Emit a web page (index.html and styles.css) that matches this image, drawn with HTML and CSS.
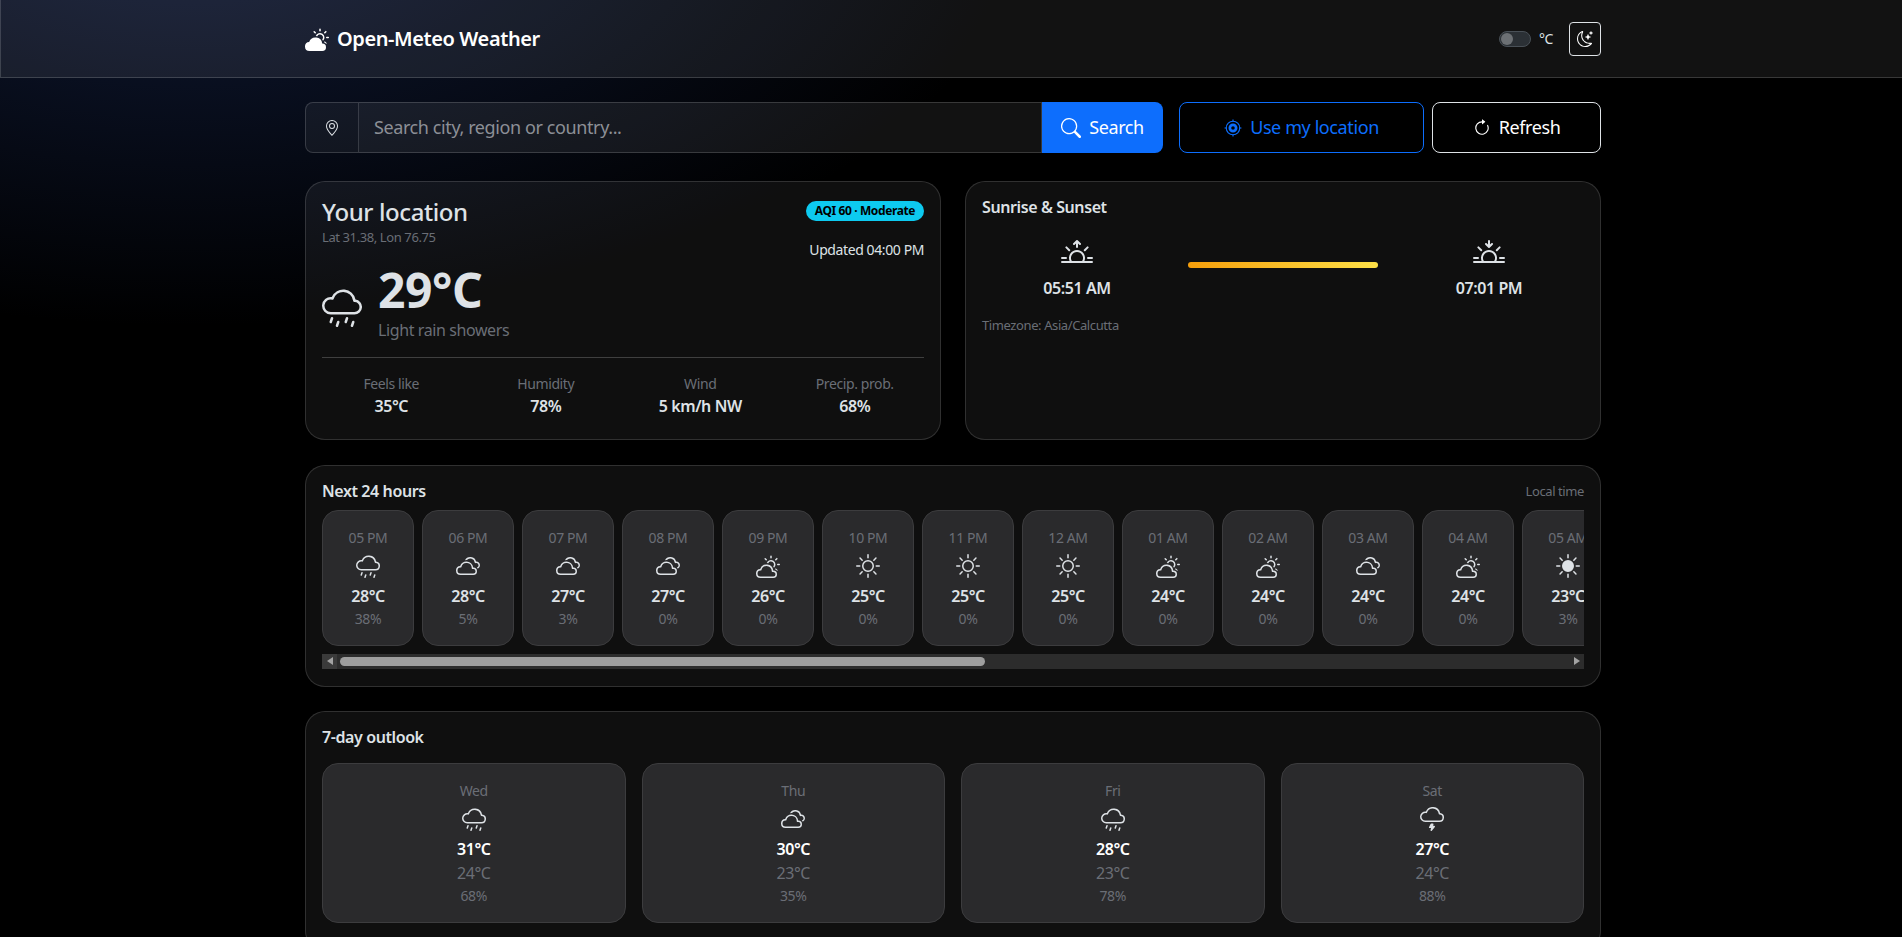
FILE: index.html
```html
<!DOCTYPE html>
<html lang="en">
<head>
  <meta charset="UTF-8">
  <title>Open-Meteo Weather</title>
  <link rel="stylesheet" href="styles.css">
</head>
<body>
  <svg class="sprite" xmlns="http://www.w3.org/2000/svg">
    <symbol id="i-brand" viewBox="0 0 16 16"><path d="M11.473 11a4.5 4.5 0 0 0-8.72-.99A3 3 0 0 0 3 16h8.5a2.5 2.5 0 0 0 0-5z"/><path d="M10.5 1.5a.5.5 0 0 0-1 0v1a.5.5 0 0 0 1 0zm3.743 1.964a.5.5 0 1 0-.707-.707l-.708.707a.5.5 0 0 0 .708.708zm-7.779-.707a.5.5 0 0 0-.707.707l.707.708a.5.5 0 1 0 .708-.708zm1.734 3.374a2 2 0 1 1 3.296 2.198q.3.423.516.898a3 3 0 1 0-4.84-3.225q.529.017 1.028.129m4.484 4.074c.6.215 1.125.59 1.522 1.072a.5.5 0 0 0 .039-.742l-.707-.707a.5.5 0 0 0-.854.377M14.5 6.5a.5.5 0 0 0 0 1h1a.5.5 0 0 0 0-1z"/></symbol>
    <symbol id="i-moon" viewBox="0 0 16 16"><path d="M6 .278a.77.77 0 0 1 .08.858 7.2 7.2 0 0 0-.878 3.46c0 4.021 3.278 7.277 7.318 7.277q.792-.001 1.533-.16a.79.79 0 0 1 .81.316.73.73 0 0 1-.031.893A8.35 8.35 0 0 1 8.344 16C3.734 16 0 12.286 0 7.71 0 4.266 2.114 1.312 5.124.06A.75.75 0 0 1 6 .278M4.858 1.311A7.27 7.27 0 0 0 1.025 7.71c0 4.02 3.279 7.276 7.319 7.276a7.32 7.32 0 0 0 5.205-2.162q-.506.063-1.029.063c-4.61 0-8.343-3.714-8.343-8.29 0-1.167.242-2.278.681-3.286"/><path d="M10.794 3.148a.217.217 0 0 1 .412 0l.387 1.162c.173.518.579.924 1.097 1.097l1.162.387a.217.217 0 0 1 0 .412l-1.162.387a1.73 1.73 0 0 0-1.097 1.097l-.387 1.162a.217.217 0 0 1-.412 0l-.387-1.162A1.73 1.73 0 0 0 9.31 6.593l-1.162-.387a.217.217 0 0 1 0-.412l1.162-.387a1.73 1.73 0 0 0 1.097-1.097zM13.863.099a.145.145 0 0 1 .274 0l.258.774c.115.346.386.617.732.732l.774.258a.145.145 0 0 1 0 .274l-.774.258a1.16 1.16 0 0 0-.732.732l-.258.774a.145.145 0 0 1-.274 0l-.258-.774a1.16 1.16 0 0 0-.732-.732l-.774-.258a.145.145 0 0 1 0-.274l.774-.258c.346-.115.617-.386.732-.732z"/></symbol>
    <symbol id="i-geo" viewBox="0 0 16 16"><path d="M12.166 8.94c-.524 1.062-1.234 2.12-1.96 3.07A32 32 0 0 1 8 14.58a32 32 0 0 1-2.206-2.57c-.726-.95-1.436-2.008-1.96-3.07C3.304 7.867 3 6.862 3 6a5 5 0 0 1 10 0c0 .862-.305 1.867-.834 2.94M8 16s6-5.686 6-10A6 6 0 0 0 2 6c0 4.314 6 10 6 10"/><path d="M8 8a2 2 0 1 1 0-4 2 2 0 0 1 0 4m0 1a3 3 0 1 0 0-6 3 3 0 0 0 0 6"/></symbol>
    <symbol id="i-search" viewBox="0 0 16 16"><path d="M11.742 10.344a6.5 6.5 0 1 0-1.397 1.398h-.001q.044.06.098.115l3.85 3.85a1 1 0 0 0 1.415-1.414l-3.85-3.85a1 1 0 0 0-.115-.1zM12 6.5a5.5 5.5 0 1 1-11 0 5.5 5.5 0 0 1 11 0"/></symbol>
    <symbol id="i-target" viewBox="0 0 16 16"><path d="M7.5.5h1v2h-1zM7.5 13.5h1v2h-1zM.5 7.5h2v1h-2zM13.5 7.5h2v1h-2z"/><path d="M8 1.5a6.5 6.5 0 1 1 0 13 6.5 6.5 0 0 1 0-13m0 1a5.5 5.5 0 1 0 0 11 5.5 5.5 0 0 0 0-11"/><path d="M8 4a4 4 0 1 1 0 8 4 4 0 0 1 0-8m0 2.4a1.6 1.6 0 1 0 0 3.2 1.6 1.6 0 0 0 0-3.2"/></symbol>
    <symbol id="i-refresh" viewBox="0 0 16 16"><path fill-rule="evenodd" d="M8 3a5 5 0 1 0 4.546 2.914.5.5 0 0 1 .908-.417A6 6 0 1 1 8 2z"/><path d="M8 4.466V.534a.25.25 0 0 1 .41-.192l2.36 1.966c.12.1.12.284 0 .384L8.41 4.658A.25.25 0 0 1 8 4.466"/></symbol>
    <symbol id="i-drizzle" viewBox="0 0 16 16"><path d="M4.158 12.025a.5.5 0 0 1 .316.633l-.5 1.5a.5.5 0 0 1-.948-.316l.5-1.5a.5.5 0 0 1 .632-.317m6 0a.5.5 0 0 1 .316.633l-.5 1.5a.5.5 0 0 1-.948-.316l.5-1.5a.5.5 0 0 1 .632-.317m-3.5 1.5a.5.5 0 0 1 .316.633l-.5 1.5a.5.5 0 0 1-.948-.316l.5-1.5a.5.5 0 0 1 .632-.317m6 0a.5.5 0 0 1 .316.633l-.5 1.5a.5.5 0 1 1-.948-.316l.5-1.5a.5.5 0 0 1 .632-.317m.747-8.498a5.001 5.001 0 0 0-9.499-1.004A3.5 3.5 0 1 0 3.5 11H13a3 3 0 0 0 .405-5.973M8.5 2a4 4 0 0 1 3.976 3.555.5.5 0 0 0 .5.445H13a2 2 0 0 1 0 4H3.5a2.5 2.5 0 1 1 .605-4.926.5.5 0 0 0 .596-.329A4 4 0 0 1 8.5 2"/></symbol>
    <symbol id="i-clouds" viewBox="0 0 16 16"><path d="M16 7.5a2.5 2.5 0 0 1-1.456 2.272 3.5 3.5 0 0 0-.65-.824 1.5 1.5 0 0 0-.789-2.896.5.5 0 0 1-.627-.421 3 3 0 0 0-5.22-1.625 5.6 5.6 0 0 0-1.276.088 4.002 4.002 0 0 1 7.392.91A2.5 2.5 0 0 1 16 7.5"/><path d="M7 5a4.5 4.5 0 0 1 4.473 4h.027a2.5 2.5 0 0 1 0 5H3a3 3 0 0 1-.247-5.99A4.5 4.5 0 0 1 7 5m3.5 4.5a3.5 3.5 0 0 0-6.89-.873.5.5 0 0 1-.51.375A2 2 0 1 0 3 13h8.5a1.5 1.5 0 1 0-.376-2.953.5.5 0 0 1-.624-.492z"/></symbol>
    <symbol id="i-cloud-sun" viewBox="0 0 16 16"><path d="M7 8a3.5 3.5 0 0 1 3.5 3.555.5.5 0 0 0 .624.492A1.503 1.503 0 0 1 13 13.5a1.5 1.5 0 0 1-1.5 1.5H3a2 2 0 1 1 .1-3.998.5.5 0 0 0 .51-.375A3.5 3.5 0 0 1 7 8m4.473 3a4.5 4.5 0 0 0-8.72-.99A3 3 0 0 0 3 16h8.5a2.5 2.5 0 0 0 0-5z"/><path d="M10.5 1.5a.5.5 0 0 0-1 0v1a.5.5 0 0 0 1 0zm3.743 1.964a.5.5 0 1 0-.707-.707l-.708.707a.5.5 0 0 0 .708.708zm-7.779-.707a.5.5 0 0 0-.707.707l.707.708a.5.5 0 1 0 .708-.708zm1.734 3.374a2 2 0 1 1 3.296 2.198q.3.423.516.898a3 3 0 1 0-4.84-3.225q.529.017 1.028.129m4.484 4.074c.6.215 1.125.59 1.522 1.072a.5.5 0 0 0 .039-.742l-.707-.707a.5.5 0 0 0-.854.377M14.5 6.5a.5.5 0 0 0 0 1h1a.5.5 0 0 0 0-1z"/></symbol>
    <symbol id="i-sun" viewBox="0 0 16 16"><path d="M8 11a3 3 0 1 1 0-6 3 3 0 0 1 0 6m0 1a4 4 0 1 0 0-8 4 4 0 0 0 0 8M8 0a.5.5 0 0 1 .5.5v2a.5.5 0 0 1-1 0v-2A.5.5 0 0 1 8 0m0 13a.5.5 0 0 1 .5.5v2a.5.5 0 0 1-1 0v-2A.5.5 0 0 1 8 13m8-5a.5.5 0 0 1-.5.5h-2a.5.5 0 0 1 0-1h2a.5.5 0 0 1 .5.5M3 8a.5.5 0 0 1-.5.5h-2a.5.5 0 0 1 0-1h2A.5.5 0 0 1 3 8m10.657-5.657a.5.5 0 0 1 0 .707l-1.414 1.415a.5.5 0 1 1-.707-.708l1.414-1.414a.5.5 0 0 1 .707 0m-9.193 9.193a.5.5 0 0 1 0 .707L3.05 13.657a.5.5 0 0 1-.707-.707l1.414-1.414a.5.5 0 0 1 .707 0m9.193 2.121a.5.5 0 0 1-.707 0l-1.414-1.414a.5.5 0 0 1 .707-.707l1.414 1.414a.5.5 0 0 1 0 .707M4.464 4.465a.5.5 0 0 1-.707 0L2.343 3.05a.5.5 0 1 1 .707-.707l1.414 1.414a.5.5 0 0 1 0 .708"/></symbol>
    <symbol id="i-sun-fill" viewBox="0 0 16 16"><path d="M8 12a4 4 0 1 0 0-8 4 4 0 0 0 0 8M8 0a.5.5 0 0 1 .5.5v2a.5.5 0 0 1-1 0v-2A.5.5 0 0 1 8 0m0 13a.5.5 0 0 1 .5.5v2a.5.5 0 0 1-1 0v-2A.5.5 0 0 1 8 13m8-5a.5.5 0 0 1-.5.5h-2a.5.5 0 0 1 0-1h2a.5.5 0 0 1 .5.5M3 8a.5.5 0 0 1-.5.5h-2a.5.5 0 0 1 0-1h2A.5.5 0 0 1 3 8m10.657-5.657a.5.5 0 0 1 0 .707l-1.414 1.415a.5.5 0 1 1-.707-.708l1.414-1.414a.5.5 0 0 1 .707 0m-9.193 9.193a.5.5 0 0 1 0 .707L3.05 13.657a.5.5 0 0 1-.707-.707l1.414-1.414a.5.5 0 0 1 .707 0m9.193 2.121a.5.5 0 0 1-.707 0l-1.414-1.414a.5.5 0 0 1 .707-.707l1.414 1.414a.5.5 0 0 1 0 .707M4.464 4.465a.5.5 0 0 1-.707 0L2.343 3.05a.5.5 0 1 1 .707-.707l1.414 1.414a.5.5 0 0 1 0 .708"/></symbol>
    <symbol id="i-sunrise" viewBox="0 0 16 16"><path d="M7.646 1.146a.5.5 0 0 1 .708 0l1.5 1.5a.5.5 0 0 1-.708.708L8.5 2.707V4.5a.5.5 0 0 1-1 0V2.707l-.646.647a.5.5 0 1 1-.708-.708zM2.343 4.343a.5.5 0 0 1 .707 0l1.414 1.414a.5.5 0 0 1-.707.707L2.343 5.05a.5.5 0 0 1 0-.707m11.314 0a.5.5 0 0 1 0 .707l-1.414 1.414a.5.5 0 1 1-.707-.707l1.414-1.414a.5.5 0 0 1 .707 0M8 7a3 3 0 0 1 2.599 4.5H5.4A3 3 0 0 1 8 7m3.71 4.5a4 4 0 1 0-7.418 0H.499a.5.5 0 0 0 0 1h15a.5.5 0 0 0 0-1h-3.79zM0 10a.5.5 0 0 1 .5-.5h2a.5.5 0 0 1 0 1h-2A.5.5 0 0 1 0 10m13 0a.5.5 0 0 1 .5-.5h2a.5.5 0 0 1 0 1h-2a.5.5 0 0 1-.5-.5"/></symbol>
    <symbol id="i-sunset" viewBox="0 0 16 16"><path d="M7.646 4.854a.5.5 0 0 0 .708 0l1.5-1.5a.5.5 0 0 0-.708-.708l-.646.647V1.5a.5.5 0 0 0-1 0v1.793l-.646-.647a.5.5 0 1 0-.708.708zm-5.303-.51a.5.5 0 0 1 .707 0l1.414 1.413a.5.5 0 0 1-.707.707L2.343 5.05a.5.5 0 0 1 0-.707zm11.314 0a.5.5 0 0 1 0 .706l-1.414 1.414a.5.5 0 1 1-.707-.707l1.414-1.414a.5.5 0 0 1 .707 0zM8 7a3 3 0 0 1 2.599 4.5H5.4A3 3 0 0 1 8 7zm3.71 4.5a4 4 0 1 0-7.418 0H.499a.5.5 0 0 0 0 1h15a.5.5 0 0 0 0-1h-3.79zM0 10a.5.5 0 0 1 .5-.5h2a.5.5 0 0 1 0 1h-2A.5.5 0 0 1 0 10zm13 0a.5.5 0 0 1 .5-.5h2a.5.5 0 0 1 0 1h-2a.5.5 0 0 1-.5-.5z"/></symbol>
    <symbol id="i-storm" viewBox="0 0 16 16"><path d="M13.405 4.027a5.001 5.001 0 0 0-9.499-1.004A3.5 3.5 0 1 0 3.5 10H13a3 3 0 0 0 .405-5.973M8.5 1a4 4 0 0 1 3.976 3.555.5.5 0 0 0 .5.445H13a2 2 0 0 1 0 4H3.5a2.5 2.5 0 1 1 .605-4.926.5.5 0 0 0 .596-.329A4 4 0 0 1 8.5 1M7.053 11.276A.5.5 0 0 1 7.5 11h1a.5.5 0 0 1 .474.658l-.28.842H9.5a.5.5 0 0 1 .39.812l-2 2.5a.5.5 0 0 1-.875-.433L7.36 14H6.5a.5.5 0 0 1-.447-.724z"/></symbol>
  </svg>

  <header class="topbar">
    <div class="page topbar-inner">
      <div class="brand"><svg class="bi brand-icon"><use href="#i-brand"/></svg><span>Open-Meteo Weather</span></div>
      <div class="topbar-tools">
        <span class="switch"><span class="switch-knob"></span></span>
        <span class="unit">°C</span>
        <button class="theme-btn" type="button"><svg class="bi"><use href="#i-moon"/></svg></button>
      </div>
    </div>
  </header>

  <main class="page">
    <div class="search-row">
      <form class="search-box">
        <span class="search-addon"><svg class="bi"><use href="#i-geo"/></svg></span>
        <input class="search-input" type="text" placeholder="Search city, region or country...">
        <button class="search-btn" type="submit"><svg class="bi"><use href="#i-search"/></svg>Search</button>
      </form>
      <button class="btn btn-blue" type="button"><svg class="bi"><use href="#i-target"/></svg>Use my location</button>
      <button class="btn btn-white" type="button"><svg class="bi"><use href="#i-refresh"/></svg>Refresh</button>
    </div>

    <div class="top-cards">
      <section class="card current">
        <div class="current-head">
          <div>
            <h1 class="place">Your location</h1>
            <div class="muted coords">Lat 31.38, Lon 76.75</div>
          </div>
          <div class="current-side">
            <span class="aqi">AQI 60 · Moderate</span>
            <div class="updated">Updated 04:00 PM</div>
          </div>
        </div>
        <div class="now">
          <svg class="bi now-icon"><use href="#i-drizzle"/></svg>
          <div>
            <div class="now-temp">29°C</div>
            <div class="muted now-text">Light rain showers</div>
          </div>
        </div>
        <div class="stats">
          <div class="stat"><div class="muted">Feels like</div><b>35°C</b></div>
          <div class="stat"><div class="muted">Humidity</div><b>78%</b></div>
          <div class="stat"><div class="muted">Wind</div><b>5 km/h NW</b></div>
          <div class="stat"><div class="muted">Precip. prob.</div><b>68%</b></div>
        </div>
      </section>

      <section class="card">
        <h2 class="card-title">Sunrise &amp; Sunset</h2>
        <div class="sun-row">
          <div class="sun-col"><svg class="bi sun-icon"><use href="#i-sunrise"/></svg><b>05:51 AM</b></div>
          <div class="sun-bar"></div>
          <div class="sun-col"><svg class="bi sun-icon"><use href="#i-sunset"/></svg><b>07:01 PM</b></div>
        </div>
        <div class="muted timezone">Timezone: Asia/Calcutta</div>
      </section>
    </div>

    <section class="card hours-card">
      <div class="card-head">
        <h2 class="card-title">Next 24 hours</h2>
        <span class="muted local">Local time</span>
      </div>
      <div class="hours">
        <div class="tile hour"><span class="muted">05 PM</span><svg class="bi"><use href="#i-drizzle"/></svg><b>28°C</b><span class="muted">38%</span></div>
        <div class="tile hour"><span class="muted">06 PM</span><svg class="bi"><use href="#i-clouds"/></svg><b>28°C</b><span class="muted">5%</span></div>
        <div class="tile hour"><span class="muted">07 PM</span><svg class="bi"><use href="#i-clouds"/></svg><b>27°C</b><span class="muted">3%</span></div>
        <div class="tile hour"><span class="muted">08 PM</span><svg class="bi"><use href="#i-clouds"/></svg><b>27°C</b><span class="muted">0%</span></div>
        <div class="tile hour"><span class="muted">09 PM</span><svg class="bi"><use href="#i-cloud-sun"/></svg><b>26°C</b><span class="muted">0%</span></div>
        <div class="tile hour"><span class="muted">10 PM</span><svg class="bi"><use href="#i-sun"/></svg><b>25°C</b><span class="muted">0%</span></div>
        <div class="tile hour"><span class="muted">11 PM</span><svg class="bi"><use href="#i-sun"/></svg><b>25°C</b><span class="muted">0%</span></div>
        <div class="tile hour"><span class="muted">12 AM</span><svg class="bi"><use href="#i-sun"/></svg><b>25°C</b><span class="muted">0%</span></div>
        <div class="tile hour"><span class="muted">01 AM</span><svg class="bi"><use href="#i-cloud-sun"/></svg><b>24°C</b><span class="muted">0%</span></div>
        <div class="tile hour"><span class="muted">02 AM</span><svg class="bi"><use href="#i-cloud-sun"/></svg><b>24°C</b><span class="muted">0%</span></div>
        <div class="tile hour"><span class="muted">03 AM</span><svg class="bi"><use href="#i-clouds"/></svg><b>24°C</b><span class="muted">0%</span></div>
        <div class="tile hour"><span class="muted">04 AM</span><svg class="bi"><use href="#i-cloud-sun"/></svg><b>24°C</b><span class="muted">0%</span></div>
        <div class="tile hour"><span class="muted">05 AM</span><svg class="bi"><use href="#i-sun-fill"/></svg><b>23°C</b><span class="muted">3%</span></div>
      </div>
      <div class="scrollbar">
        <span class="scroll-btn"><span class="arrow-left"></span></span>
        <span class="scroll-track"><span class="scroll-thumb"></span></span>
        <span class="scroll-btn end"><span class="arrow-right"></span></span>
      </div>
    </section>

    <section class="card week-card">
      <h2 class="card-title">7-day outlook</h2>
      <div class="days">
        <div class="tile day"><span class="muted">Wed</span><svg class="bi"><use href="#i-drizzle"/></svg><b>31°C</b><span class="muted low">24°C</span><span class="muted">68%</span></div>
        <div class="tile day"><span class="muted">Thu</span><svg class="bi"><use href="#i-clouds"/></svg><b>30°C</b><span class="muted low">23°C</span><span class="muted">35%</span></div>
        <div class="tile day"><span class="muted">Fri</span><svg class="bi"><use href="#i-drizzle"/></svg><b>28°C</b><span class="muted low">23°C</span><span class="muted">78%</span></div>
        <div class="tile day"><span class="muted">Sat</span><svg class="bi"><use href="#i-storm"/></svg><b>27°C</b><span class="muted low">24°C</span><span class="muted">88%</span></div>
      </div>
    </section>
  </main>
</body>
</html>
```

FILE: styles.css
```css
* { box-sizing: border-box; }
html, body { height: 100%; overflow: hidden; }
body {
  margin: 0;
  font-family: "Noto Sans", "Open Sans", sans-serif;
  font-size: 16px;
  line-height: 1.5;
  letter-spacing: -0.025em;
  color: #dee2e6;
  background: radial-gradient(1200px 600px at 10% -10%, rgba(37, 62, 130, .42), transparent 70%), #000;
}
.sprite { display: none; }
.bi { width: 1em; height: 1em; fill: currentColor; display: inline-block; flex: none; }
.muted { color: #6a6e76; font-size: 14px; }
b { font-weight: 600; }

.page { width: 1296px; margin-left: 305px; }

.topbar { height: 78px; border: 1px solid rgba(255, 255, 255, .16); border-top: 0; border-right: 0; background: rgba(255, 255, 255, .07); }
.topbar-inner { height: 100%; display: flex; align-items: center; justify-content: space-between; margin-left: 304px; }
.brand { display: flex; align-items: center; gap: 8px; font-size: 20px; font-weight: 600; color: #fff; }
.brand-icon { font-size: 24px; }
.topbar-tools { display: flex; align-items: center; color: #dee2e6; }
.switch { width: 32px; height: 16px; border-radius: 8px; background: #2b3035; border: 1px solid #495057; display: flex; align-items: center; padding-left: 1px; }
.switch-knob { width: 12px; height: 12px; border-radius: 50%; background: #6c7074; }
.unit { font-size: 14px; margin: 0 16px 0 8px; }
.theme-btn { width: 32px; height: 34px; padding: 0; border: 1px solid #dee2e6; border-radius: 4px; background: none; color: #fff; font-size: 16px; display: flex; align-items: center; justify-content: center; }

.search-row { display: flex; align-items: stretch; height: 51px; margin: 24px 0 28px; }
.search-box { flex: 1; display: flex; margin-right: 16px; }
.search-addon { width: 54px; display: flex; align-items: center; justify-content: center; font-size: 16px; color: #dee2e6; background: rgba(255, 255, 255, .05); border: 1px solid rgba(255, 255, 255, .16); border-radius: 8px 0 0 8px; }
.search-input { flex: 1; min-width: 0; padding: 0 15px; font: inherit; font-size: 18px; letter-spacing: inherit; color: #dee2e6; background: rgba(255, 255, 255, .07); border: 1px solid rgba(255, 255, 255, .16); border-left: 0; outline: none; }
.search-input::placeholder { color: #8c8f96; opacity: 1; }
.search-btn { width: 121px; display: flex; align-items: center; justify-content: center; gap: 8px; padding: 0; font: inherit; font-size: 18px; letter-spacing: inherit; color: #fff; background: #0d6efd; border: 0; border-radius: 0 8px 8px 0; }
.search-btn .bi { font-size: 20px; }
.btn { display: flex; align-items: center; justify-content: center; gap: 8px; padding: 0; font: inherit; font-size: 18px; letter-spacing: inherit; background: none; border-radius: 8px; border: 1px solid; }
.btn .bi { font-size: 18px; }
.btn-blue { width: 245px; color: #0d6efd; border-color: #0d6efd; margin-right: 8px; }
.btn-white { width: 169px; color: #fff; border-color: #dee2e6; }

.card { padding: 16px; background: rgba(255, 255, 255, .06); border: 1px solid rgba(255, 255, 255, .14); border-radius: 20px; }
.top-cards { display: grid; grid-template-columns: 1fr 1fr; gap: 24px; height: 259px; margin-bottom: 25px; }

.current-head { display: flex; justify-content: space-between; align-items: flex-start; }
.place { margin: 0; font-size: 24px; font-weight: 500; line-height: 1.2; }
.coords { font-size: 13px; margin-top: 1px; }
.current-side { display: flex; flex-direction: column; align-items: flex-end; margin-top: 3px; }
.aqi { height: 20px; padding: 0 9px; border-radius: 10px; background: #0dcaf0; color: #000; font-size: 12px; font-weight: 700; line-height: 20px; }
.updated { font-size: 14px; margin-top: 18px; }
.now { display: flex; align-items: center; gap: 16px; margin-top: 1px; }
.now-icon { font-size: 40px; margin-top: 12px; }
.now-temp { font-size: 48px; font-weight: 700; line-height: 1.2; }
.now-text { font-size: 16px; margin-top: -1px; }
.stats { display: grid; grid-template-columns: repeat(4, 1fr); margin: 15px -8px 0; padding: 16px 0 0; position: relative; text-align: center; }
.stats::before { content: ""; position: absolute; top: 0; left: 8px; right: 8px; height: 1px; background: rgba(255, 255, 255, .2); }
.stat b { display: block; }

.card-title { margin: 0; font-size: 16px; font-weight: 600; line-height: 1.2; }
.sun-row { display: grid; grid-template-columns: repeat(3, 1fr); gap: 16px; align-items: center; margin-top: 13px; text-align: center; }
.sun-col { display: flex; flex-direction: column; align-items: center; }
.sun-icon { font-size: 32px; margin: 8px 0 6px; }
.sun-bar { height: 6px; border-radius: 3px; background: linear-gradient(90deg, #f59e0b, #fde047); }
.timezone { font-size: 13px; margin-top: 16px; }

.hours-card { height: 222px; margin-bottom: 24px; }
.card-head { display: flex; justify-content: space-between; align-items: center; }
.local { font-size: 13px; }
.hours { display: flex; gap: 8px; overflow: hidden; margin-top: 8px; }
.tile { display: flex; flex-direction: column; align-items: center; text-align: center; padding: 16px; background: #2a2a2c; border: 1px solid #3c3c3e; border-radius: 16px; }
.tile .bi { font-size: 24px; margin: 6px 0; }
.hour { flex: none; width: 92px; height: 136px; }
.scrollbar { display: flex; height: 15px; margin-top: 8px; background: #2c2c2c; }
.scroll-btn { width: 15px; display: flex; align-items: center; justify-content: center; background: #3a3a3a; }
.scroll-btn.end { background: #2c2c2c; }
.arrow-left { border: 4px solid transparent; border-left: 0; border-right: 6px solid #a3a3a3; }
.arrow-right { border: 4px solid transparent; border-right: 0; border-left: 6px solid #a3a3a3; }
.scroll-track { flex: 1; padding: 3px 0 3px 3px; }
.scroll-thumb { display: block; width: 645px; height: 9px; border-radius: 5px; background: #9e9e9e; }

.week-card { min-height: 240px; }
.days { display: grid; grid-template-columns: repeat(4, 1fr); gap: 16px; margin-top: 16px; }
.day { height: 160px; }
.day b { color: #fff; }
.low { font-size: 16px; }
```
